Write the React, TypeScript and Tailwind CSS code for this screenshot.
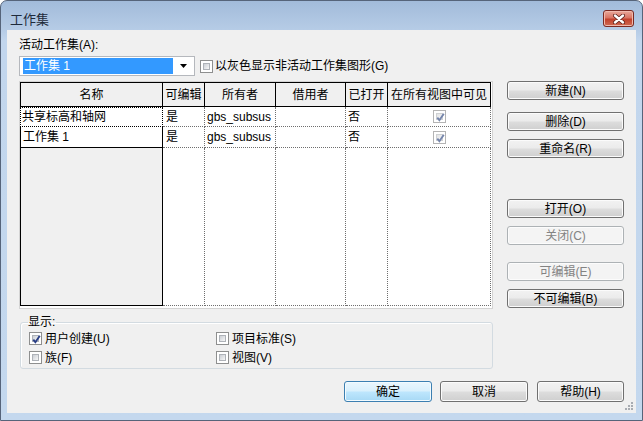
import React from "react";

type BtnProps = {
  label: string;
  className: string;
  disabled?: boolean;
  primary?: boolean;
};

const Btn = ({ label, className, disabled, primary }: BtnProps) => {
  let look =
    "border-[#707070] text-black bg-[linear-gradient(#f2f2f2_0%,#ebebeb_48%,#dddddd_52%,#cfcfcf_100%)] shadow-[inset_0_0_0_1px_#fbfbfb]";
  if (disabled)
    look = "border-[#adb2b5] text-[#838383] bg-[#f4f4f4] shadow-[inset_0_0_0_1px_#fcfcfc]";
  if (primary)
    look =
      "border-[#3c7fb1] text-black bg-[linear-gradient(#eaf6fd_0%,#d9f0fc_48%,#bee6fd_52%,#a7d9f5_100%)] shadow-[inset_0_0_0_1px_#f2fbff]";
  return (
    <div
      className={`flex items-center justify-center rounded-[3px] border text-[12px] leading-[14px] ${look} ${className}`}
    >
      {label}
    </div>
  );
};

const Check = ({ checked, disabled }: { checked?: boolean; disabled?: boolean }) => (
  <span
    className={`relative inline-flex w-[13px] h-[13px] shrink-0 border bg-white p-[2px] ${
      disabled ? "border-[#b4b4b4]" : "border-[#8e8f8f]"
    }`}
  >
    <span
      className={`w-full h-full border ${
        disabled
          ? "border-[#cfd1d3] bg-[linear-gradient(135deg,#e2e3e5,#f7f7f7)]"
          : "border-[#aeb2b8] bg-[linear-gradient(135deg,#cbcfd5,#f7f7f7)]"
      }`}
    />
    {checked && (
      <svg className="absolute left-[1px] top-[1px]" width="11" height="11" viewBox="0 0 11 11">
        <path
          d="M2.3 5.6 L4.4 8.2 L8.8 1.8"
          fill="none"
          stroke={disabled ? "#7585ab" : "#2a3f86"}
          strokeWidth="1.9"
        />
      </svg>
    )}
  </span>
);

const hd = "bg-[#f0f0f0] border-t border-r border-b border-black flex items-center justify-center overflow-hidden whitespace-nowrap";
const dc = "bg-white border-r border-b border-dotted border-[#6e6e6e] flex items-center whitespace-nowrap overflow-hidden";

export default function App() {
  return (
    <div className="w-[643px] h-[421px] overflow-hidden bg-white font-['Liberation_Sans','Noto_Sans_CJK_SC',sans-serif] text-[12px] leading-[14px] text-black">
      <div className="w-full h-full flex flex-col rounded-t-[7px] border border-[#56647a] bg-[linear-gradient(#a2bbda_0px,#b6cce6_29px,#c2d6ed_40px,#c4d8ee_100%)]">
        {/* title bar */}
        <div className="h-[29px] shrink-0 flex items-start justify-between pl-[9px] pr-[8px]">
          <span className="mt-[11px] text-[13px] leading-[15px] text-[#1e2a3a]">工作集</span>
          <div className="mt-[9px] w-[31px] h-[17px] rounded-[3px] border border-[#7a2a22] bg-[linear-gradient(#e9a99b_0%,#d97463_45%,#c2412c_55%,#cf6a52_100%)] shadow-[inset_0_0_0_1px_#f0b9ad] flex items-center justify-center">
            <svg width="12" height="10" viewBox="0 0 12 10">
              <path d="M2 1.5 L10 8.5 M10 1.5 L2 8.5" stroke="#5a1d16" strokeWidth="4" strokeLinecap="round" />
              <path d="M2 1.5 L10 8.5 M10 1.5 L2 8.5" stroke="#ffffff" strokeWidth="2.4" strokeLinecap="round" />
            </svg>
          </div>
        </div>

        {/* client */}
        <div className="relative mx-[6px] flex-1 bg-[#f0f0f0] flex flex-col pl-[12px] pt-[8px]">
          <div>活动工作集(A):</div>

          <div className="mt-[4px] flex items-center h-[20px]">
            <div className="w-[176px] h-[20px] border border-[#b5b8bd] bg-white flex items-center pl-[3px]">
              <div className="w-[150px] h-[16px] bg-[#3399ff] text-white flex items-center pl-[1px]">工作集 1</div>
              <div className="flex-1 flex items-center justify-center">
                <svg width="7" height="4" viewBox="0 0 7 4">
                  <path d="M0 0 H7 L3.5 4 Z" fill="#000" />
                </svg>
              </div>
            </div>
            <div className="ml-[5px] flex items-center">
              <Check />
              <span className="ml-[2px]">以灰色显示非活动工作集图形(G)</span>
            </div>
          </div>

          {/* table + right buttons */}
          <div className="mt-[5px] flex">
            <div className="w-[474px] h-[228px] border border-[#d4d4d4] bg-white">
              <div className="grid grid-cols-[143px_42px_71px_70px_42px_103px] grid-rows-[25px_20px_21px_158px]">
                <div className={`${hd} border-l`}>名称</div>
                <div className={hd}>可编辑</div>
                <div className={hd}>所有者</div>
                <div className={hd}>借用者</div>
                <div className={hd}>已打开</div>
                <div className={hd}>在所有视图中可见</div>

                <div className="bg-white border border-dotted border-black flex items-center pl-[1px] whitespace-nowrap">共享标高和轴网</div>
                <div className={`${dc} pl-[3px]`}>是</div>
                <div className={`${dc} pl-[2px]`}>gbs_subsus</div>
                <div className={dc}></div>
                <div className={`${dc} pl-[2px]`}>否</div>
                <div className={`${dc} justify-center`}>
                  <Check checked disabled />
                </div>

                <div className="bg-white border-l border-r border-b border-black flex items-center pl-[2px]">工作集 1</div>
                <div className={`${dc} pl-[3px]`}>是</div>
                <div className={`${dc} pl-[2px]`}>gbs_subsus</div>
                <div className={dc}></div>
                <div className={`${dc} pl-[2px]`}>否</div>
                <div className={`${dc} justify-center`}>
                  <Check checked disabled />
                </div>

                <div className="bg-[#f0f0f0] border-l border-r border-b border-black"></div>
                <div className={dc}></div>
                <div className={dc}></div>
                <div className={dc}></div>
                <div className={dc}></div>
                <div className={dc}></div>
              </div>
            </div>

            <div className="ml-[14px] flex flex-col">
              <Btn label="新建(N)" className="w-[117px] h-[19px]" />
              <Btn label="删除(D)" className="w-[117px] h-[19px] mt-[12px]" />
              <Btn label="重命名(R)" className="w-[117px] h-[19px] mt-[8px]" />
              <Btn label="打开(O)" className="w-[117px] h-[19px] mt-[41px]" />
              <Btn label="关闭(C)" className="w-[117px] h-[19px] mt-[8px]" disabled />
              <Btn label="可编辑(E)" className="w-[117px] h-[19px] mt-[17px]" disabled />
              <Btn label="不可编辑(B)" className="w-[117px] h-[19px] mt-[8px]" />
            </div>
          </div>

          {/* group box */}
          <fieldset className="mt-[6px] ml-[1px] w-[473px] h-[54px] rounded-[3px] border border-[#d3dbe1] shadow-[inset_1px_1px_0_#ffffff] px-[7px] pt-[3px]">
            <legend className="leading-[14px] pr-[1px]">显示:</legend>
            <div className="ml-[1px] grid grid-cols-[187px_1fr] gap-y-[6px]">
              <div className="flex items-center h-[13px]">
                <Check checked />
                <span className="ml-[3px]">用户创建(U)</span>
              </div>
              <div className="flex items-center h-[13px]">
                <Check />
                <span className="ml-[3px]">项目标准(S)</span>
              </div>
              <div className="flex items-center h-[13px]">
                <Check />
                <span className="ml-[3px]">族(F)</span>
              </div>
              <div className="flex items-center h-[13px]">
                <Check />
                <span className="ml-[3px]">视图(V)</span>
              </div>
            </div>
          </fieldset>

          {/* bottom buttons */}
          <div className="mt-[12px] flex justify-end pr-[12px]">
            <Btn label="确定" className="w-[88px] h-[21px]" primary />
            <Btn label="取消" className="w-[88px] h-[21px] ml-[8px]" />
            <Btn label="帮助(H)" className="w-[87px] h-[21px] ml-[9px]" />
          </div>

          {/* size grip */}
          <svg className="absolute right-[2px] bottom-[2px]" width="10" height="10" viewBox="0 0 10 10">
            <g fill="#a8acb2">
              <rect x="7" y="1" width="2" height="2" />
              <rect x="4" y="4" width="2" height="2" />
              <rect x="7" y="4" width="2" height="2" />
              <rect x="1" y="7" width="2" height="2" />
              <rect x="4" y="7" width="2" height="2" />
              <rect x="7" y="7" width="2" height="2" />
            </g>
          </svg>
        </div>
        <div className="h-[7px] shrink-0"></div>
      </div>
    </div>
  );
}
